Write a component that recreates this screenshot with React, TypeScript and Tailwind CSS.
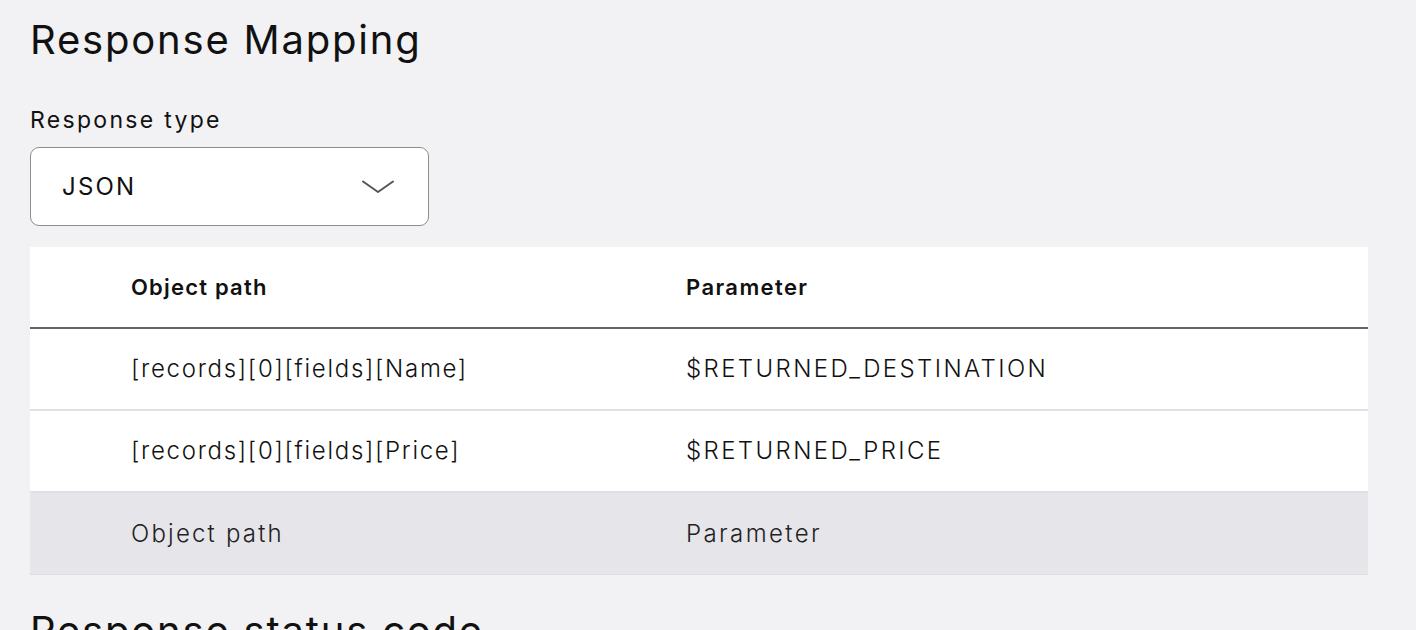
import React from "react";

interface Mapping {
    path: string;
    param: string;
}

const rows: Mapping[] = [
    { path: "[records][0][fields][Name]", param: "$RETURNED_DESTINATION" },
    { path: "[records][0][fields][Price]", param: "$RETURNED_PRICE" },
];

export default function App() {
    return (
        <div
            className="min-h-screen w-full bg-[#f2f2f4] text-[#111] overflow-hidden"
            style={{ fontFamily: "Inter, 'Noto Sans', sans-serif" }}
        >
            <div className="pl-[30px] pr-[48px] pt-[16px]">
                <h1 className="text-[40px] leading-[48px] font-normal tracking-[1.8px]">Response Mapping</h1>

                <div className="mt-[42px] text-[23px] leading-[28px] tracking-[2.3px]">Response type</div>
                <div className="mt-[13px] w-[399px] h-[79px] rounded-[9px] border-[1.5px] border-[#8e8e8e] bg-white flex items-center justify-between pl-[31px] pr-[34px]">
                    <span className="text-[24px] tracking-[2.2px]">JSON</span>
                    <svg width="32" height="14" viewBox="0 0 32 14" fill="none">
                        <path d="M1 1.5 L16 12 L31 1.5" stroke="#555" strokeWidth="2" strokeLinecap="round" strokeLinejoin="round" />
                    </svg>
                </div>

                {/* mapping table */}
                <div className="mt-[21px] w-[1338px] bg-white">
                    <div className="grid grid-cols-[656px_1fr] h-[82px] items-center border-b-2 border-[#646464]">
                        <div className="pl-[101px] text-[22px] font-semibold tracking-[1.2px]">Object path</div>
                        <div className="text-[22px] font-semibold tracking-[1.4px]">Parameter</div>
                    </div>
                    {rows.map((r) => (
                        <div
                            key={r.path}
                            className="grid grid-cols-[656px_1fr] h-[82px] items-center border-b-2 border-[#e1e0e5]"
                        >
                            <div className="pl-[101px] text-[24px] font-light tracking-[1.7px]">{r.path}</div>
                            <div className="text-[24px] font-light tracking-[2.4px]">{r.param}</div>
                        </div>
                    ))}
                    <div className="grid grid-cols-[656px_1fr] h-[82px] items-center bg-[#e6e5ea] border-b border-[#dedde2]">
                        <div className="pl-[101px] text-[24px] font-light text-[#222] tracking-[2.2px]">Object path</div>
                        <div className="text-[24px] font-light text-[#222] tracking-[2.4px]">Parameter</div>
                    </div>
                </div>

                <h2 className="mt-[32px] text-[40px] leading-[48px] font-normal tracking-[1.8px]">Response status code</h2>
            </div>
        </div>
    );
}
